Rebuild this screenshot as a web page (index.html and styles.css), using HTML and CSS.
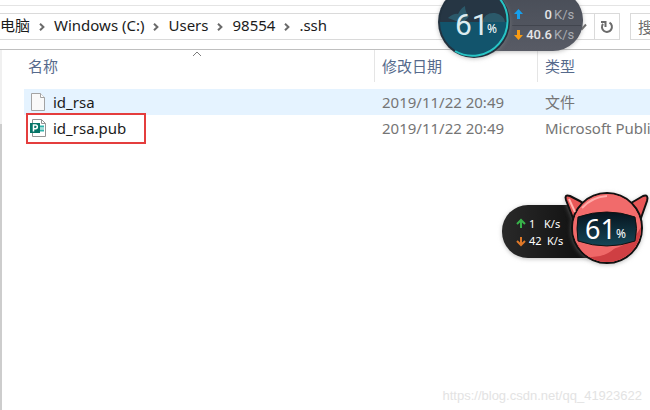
FILE: index.html
```
<!DOCTYPE html>
<html lang="zh-CN">

    <head>
        <meta charset="UTF-8">
        <meta name="viewport" content="width=device-width, initial-scale=1.0">
        <title>.ssh</title>
        <link rel="stylesheet" href="styles.css">
    </head>

    <body>
        <header class="toolbar">
            <nav class="address">
                <a class="crumb" href="#">此电脑</a>
                <svg class="sep" viewBox="0 0 6 8"><path d="M1 0.8L4.4 4L1 7.2" /></svg>
                <a class="crumb" href="#">Windows (C:)</a>
                <svg class="sep" viewBox="0 0 6 8"><path d="M1 0.8L4.4 4L1 7.2" /></svg>
                <a class="crumb" href="#">Users</a>
                <svg class="sep" viewBox="0 0 6 8"><path d="M1 0.8L4.4 4L1 7.2" /></svg>
                <a class="crumb" href="#">98554</a>
                <svg class="sep" viewBox="0 0 6 8"><path d="M1 0.8L4.4 4L1 7.2" /></svg>
                <a class="crumb" href="#">.ssh</a>
                <button class="history" type="button" aria-label="History">
                    <svg width="10" height="8" viewBox="0 0 10 8"><path d="M1 1.5L5 6L9 1.5" /></svg>
                </button>
                <button class="refresh" type="button" aria-label="Refresh">
                    <svg width="16" height="16" viewBox="0 0 16 16">
                        <path d="M10.5 3.6A5 5 0 1 1 4 4.8" />
                        <path d="M2 3H6.500V8" />
                    </svg>
                </button>
            </nav>
            <input class="search" type="text" placeholder="搜索" aria-label="搜索">
        </header>

        <main class="content">
            <div class="scrollbar"></div>
            <div class="list">
                <table class="files">
                    <thead>
                        <tr>
                            <th class="col-name">
                                <span class="head">名称</span>
                                <svg class="sort" width="10" height="6" viewBox="0 0 10 6"><path d="M1 5L5 1L9 5" /></svg>
                            </th>
                            <th class="col-date"><span class="head">修改日期</span></th>
                            <th><span class="head">类型</span></th>
                        </tr>
                    </thead>
                    <tbody>
                        <tr class="selected">
                            <td>
                                <div class="file">
                                    <svg width="18" height="20" viewBox="0 0 18 20">
                                        <path d="M3.5 1.5H12.5L16.5 5.5V18.5H3.5Z" fill="#f9f9f9" stroke="#a3a3a3" />
                                        <path d="M12.5 1.5V5.5H16.5" fill="#fff" stroke="#a3a3a3" />
                                    </svg>
                                    <span>id_rsa</span>
                                </div>
                            </td>
                            <td>2019/11/22 20:49</td>
                            <td>文件</td>
                        </tr>
                        <tr>
                            <td>
                                <div class="file">
                                    <svg width="18" height="20" viewBox="0 0 18 20">
                                        <path d="M4.5 1.5H13.5L17.5 5.5V18.5H4.5Z" fill="#fff" stroke="#939393" />
                                        <path d="M13.5 1.5V5.5H17.5" fill="none" stroke="#939393" />
                                        <path d="M12 8.500H16M12 12.500H16" fill="none" stroke="#2fb3ab" stroke-width="2" />
                                        <path d="M12 10.5H16" fill="none" stroke="#a5dcd8" />
                                        <rect x="2" y="5" width="10" height="10" fill="#077568" />
                                        <path d="M5.500 13.500V7H7.500A1.8 1.8 0 0 1 7.500 10.700H5.500" fill="none" stroke="#fff" stroke-width="1.5" />
                                    </svg>
                                    <span>id_rsa.pub</span>
                                    <div class="mark"></div>
                                </div>
                            </td>
                            <td>2019/11/22 20:49</td>
                            <td>Microsoft Publisher</td>
                        </tr>
                    </tbody>
                </table>
            </div>
        </main>

        <!-- desktop speed meters -->
        <svg class="meter" width="160" height="72" viewBox="0 0 160 72">
            <defs>
                <linearGradient id="pill" x1="0" y1="0" x2="0" y2="1">
                    <stop offset="0" stop-color="#484d57" />
                    <stop offset="1" stop-color="#585b65" />
                </linearGradient>
                <clipPath id="ball"><circle cx="40" cy="22" r="34" /></clipPath>
            </defs>
            <path class="shadow" d="M40 -10H118A30 30 0 0 1 149 21A30 30 0 0 1 118 51H40Z" fill="url(#pill)" />
            <path d="M78 25.5H147" stroke="#41454e" />
            <circle class="shadow" cx="40" cy="22" r="36" fill="#23323f" />
            <g clip-path="url(#ball)">
                <rect x="4" y="-14" width="72" height="72" fill="#263644" />
                <path d="M14 18Q20 13 24 14Q27 8 31 6Q31 12 35 16Q32 23 22 21Z" fill="#2b596a" />
                <path d="M48 22Q51 12 61 13Q70 15 71 22Z" fill="#2b596a" />
                <rect x="4" y="22" width="72" height="40" fill="#12546c" />
            </g>
            <path d="M66 -1A35 35 0 0 1 21 51" fill="none" stroke="#28c5c5" stroke-width="2" />
            <text class="big" x="21" y="35">61</text>
            <text class="percent" x="53" y="33">%</text>
            <path d="M84.5 9L89 14H86V19H83V14H80Z" fill="#16a0ec" />
            <path d="M84.5 40L89 35H86V30H83V35H80Z" fill="#f99b13" />
            <text class="speed" x="118" y="19">0</text>
            <text class="unit" x="120" y="19">K/s</text>
            <text class="speed" x="118" y="39">40.6</text>
            <text class="unit" x="120" y="39">K/s</text>
        </svg>

        <svg class="devil" width="160" height="90" viewBox="0 0 160 90">
            <defs>
                <linearGradient id="dark" x1="0" y1="0" x2="1" y2="0">
                    <stop offset="0" stop-color="#292929" />
                    <stop offset="1" stop-color="#080808" />
                </linearGradient>
                <linearGradient id="visor" x1="0" y1="0" x2="0" y2="1">
                    <stop offset="0" stop-color="#07141e" />
                    <stop offset="1" stop-color="#154656" />
                </linearGradient>
                <clipPath id="face"><circle cx="117" cy="48" r="34" /></clipPath>
            </defs>
            <rect class="shadow" x="12" y="25" width="110" height="53" rx="26" fill="url(#dark)" />
            <g class="shadow" fill="#e95757" stroke="#111" stroke-width="2">
                <path d="M83 38L76 20Q74 14 80 16Q91 21 99 27Z" />
                <path d="M151 38L157 21Q159 14 153 16Q144 21 135 27Z" />
                <circle cx="117" cy="48" r="35" />
            </g>
            <path d="M79 19L85 32" stroke="#ffb4b0" stroke-width="2" />
            <g clip-path="url(#face)">
                <rect x="82" y="13" width="70" height="70" fill="#f16b6b" />
                <path d="M84 62Q96 72 118 70Q142 66 152 45V90H83Z" fill="#cf3f43" />
                <path d="M83 52Q91 66 125 68Q112 80 93 76Z" fill="#ef6868" />
                <path d="M92 28Q102 17 117 16" fill="none" stroke="#ffaaa8" stroke-width="2" />
            </g>
            <path d="M88 37Q117 27 145 37Q148 48 145 61Q117 71 88 61Q86 48 88 37Z" fill="url(#visor)" stroke="#111" />
            <text class="big" x="95" y="59">61</text>
            <text class="percent" x="126" y="58">%</text>
            <path d="M31 48V40M27 44L31 40L35 44" fill="none" stroke="#38b34a" stroke-width="2" />
            <path d="M31 57V65M27 61L31 65L35 61" fill="none" stroke="#df7828" stroke-width="2" />
            <text class="rate" x="39" y="48">1</text>
            <text class="rate" x="54" y="48">K/s</text>
            <text class="rate" x="39" y="65">42</text>
            <text class="rate" x="57" y="65">K/s</text>
        </svg>

        <footer class="watermark">https://blog.csdn.net/qq_41923622</footer>
    </body>

</html>
```
FILE: styles.css
```
* {
    box-sizing: border-box;
}

body {
    margin: 0;
    min-height: 100vh;
    display: flex;
    flex-direction: column;
    position: relative;
    overflow: hidden;
    background-color: #fff;
    color: #1b1b1b;
    font-family: "Noto Sans", "Noto Sans CJK SC", sans-serif;
    font-size: 15px;
}

.toolbar {
    display: flex;
    gap: 10px;
    margin-top: 5px;
    padding: 7px 0 9px;
    border-top: 1px solid #e4e4e4;
    border-bottom: 1px solid #bfbfbf;
}

.address {
    flex: 1;
    display: flex;
    align-items: center;
    gap: 9px;
    height: 27px;
    min-width: 0;
    overflow: hidden;
    border: 1px solid #dadada;
    border-left: none;
}

.crumb {
    color: #1b1b1b;
    line-height: 22px;
    padding-bottom: 3px;
    text-decoration: none;
    white-space: nowrap;
}

/* the path is scrolled a little to the left */
.crumb:first-child {
    margin-left: -15px;
}

.sep {
    flex: none;
    width: 6px;
    height: 8px;
}

.sep path,
.history path,
.refresh path {
    fill: none;
    stroke: #6b6b6b;
    stroke-width: 2;
}

.history,
.refresh {
    display: flex;
    align-items: center;
    justify-content: center;
    padding: 0;
    border: none;
    background: none;
}

.history {
    width: 16px;
    margin-left: auto;
    margin-right: -5px;
}

.refresh {
    width: 25px;
    height: 25px;
    border-left: 1px solid #dadada;
}

.search {
    width: 20px;
    height: 27px;
    padding: 0 0 0 7px;
    border: 1px solid #dadada;
    border-right: none;
    font: inherit;
}

.search::placeholder {
    color: #6d6d6d;
}

.content {
    flex: 1;
    display: flex;
}

.scrollbar {
    flex: none;
    width: 2px;
    margin-right: 22px;
    background: linear-gradient(#f0f0f0 74px, #cdcdcd 74px);
}

.list {
    flex: 1;
    min-width: 0;
}

.files {
    width: 100%;
    table-layout: fixed;
    border-collapse: collapse;
}

th,
td {
    padding: 0;
    text-align: left;
    font-weight: normal;
    white-space: nowrap;
    overflow: hidden;
}

th {
    height: 39px;
    vertical-align: top;
    position: relative;
    color: #566a8c;
}

.head {
    display: block;
    height: 32px;
    padding-left: 7px;
    line-height: 32px;
    border-left: 1px solid #e5e5e5;
}

.col-name {
    width: 350px;
}

.col-name .head {
    padding-left: 3px;
    border-left-color: transparent;
}

.col-date {
    width: 163px;
}

.sort {
    position: absolute;
    top: 1px;
    left: calc(50% - 7px);
}

.sort path {
    fill: none;
    stroke: #7c7c7c;
}

td {
    height: 26px;
    padding-left: 8px;
    line-height: 26px;
    color: #757575;
}

td:first-child {
    padding-left: 4px;
    overflow: visible;
    color: #1b1b1b;
}

.selected {
    background-color: #e5f3ff;
}

.file {
    display: flex;
    align-items: center;
    gap: 7px;
    position: relative;
}

/* red frame round the public key */
.mark {
    position: absolute;
    top: -2px;
    left: -2px;
    width: 120px;
    height: 31px;
    border: 2px solid #e43d3d;
}

.meter {
    position: absolute;
    top: 0;
    left: 434px;
}

.devil {
    position: absolute;
    top: 180px;
    left: 490px;
}

.shadow {
    filter: drop-shadow(0 1px 2px #8888);
}

.meter text,
.devil text {
    fill: #fff;
}

.meter .big {
    font-family: Roboto, sans-serif;
    font-size: 30px;
    fill: #dcecf0;
}

.percent {
    font-size: 12px;
}

.meter .speed,
.meter .unit {
    font-family: Roboto, sans-serif;
    font-size: 13px;
}

.meter .speed {
    font-weight: 500;
    text-anchor: end;
    fill: #e4e5e8;
}

.meter .unit {
    fill: #a9acb3;
}

.devil .big {
    font-size: 27px;
}

.devil .rate {
    font-size: 11px;
}

.watermark {
    position: absolute;
    right: 8px;
    bottom: 7px;
    color: #e3e3e3;
    font-family: "Liberation Sans", Arial, sans-serif;
    font-size: 13px;
}
```
